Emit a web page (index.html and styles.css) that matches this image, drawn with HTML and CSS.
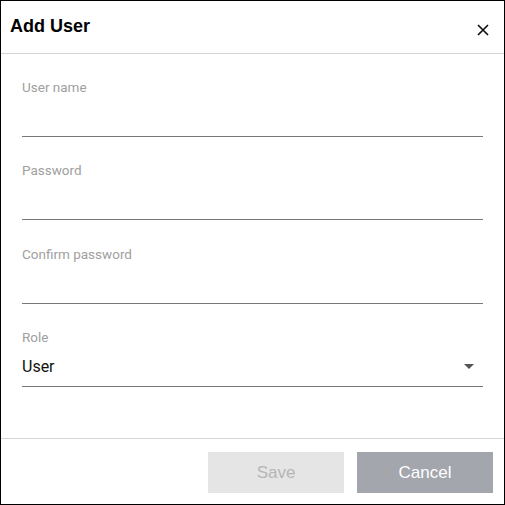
FILE: index.html
```html
<!DOCTYPE html>
<html>
<head>
<meta charset="utf-8">
<link rel="stylesheet" href="styles.css">
</head>
<body>
<div class="dialog">
  <div class="header">
    <h1 class="title">Add User</h1>
    <button class="close" aria-label="Close">
      <svg width="12" height="12" viewBox="0 0 12 12"><path d="M1 1L11 11M11 1L1 11" stroke="#111" stroke-width="1.7" fill="none"/></svg>
    </button>
  </div>
  <div class="body">
    <div class="field">
      <div class="label">User name</div>
      <div class="input"></div>
    </div>
    <div class="field">
      <div class="label">Password</div>
      <div class="input"></div>
    </div>
    <div class="field">
      <div class="label">Confirm password</div>
      <div class="input"></div>
    </div>
    <div class="field">
      <div class="label">Role</div>
      <div class="input select">
        <span class="value">User</span>
        <svg class="arrow" width="10" height="5" viewBox="0 0 10 5"><path d="M0 0H10L5 5Z" fill="#555"/></svg>
      </div>
    </div>
  </div>
  <div class="footer">
    <button class="btn save">Save</button>
    <button class="btn cancel">Cancel</button>
  </div>
</div>
</body>
</html>
```

FILE: styles.css
```css
* { box-sizing: border-box; }
html, body { margin: 0; padding: 0; background: #fff; }
.dialog {
  width: 505px;
  height: 505px;
  border: 1px solid #000;
  display: flex;
  flex-direction: column;
  font-family: Roboto, "Liberation Sans", sans-serif;
}
.header {
  height: 53px;
  border-bottom: 1px solid #d4d4d4;
  display: flex;
  align-items: center;
  justify-content: space-between;
  padding: 0 15px 0 9px;
}
.title {
  margin: 0;
  font-family: "Liberation Sans", Arial, sans-serif;
  font-weight: bold;
  font-size: 18px;
  color: #000;
  position: relative;
  top: -1px;
}
.close {
  border: 0;
  background: none;
  padding: 0;
  width: 12px;
  height: 12px;
  display: flex;
  position: relative;
  top: 3px;
}
.body {
  flex: 1;
  padding: 26px 21px 0 21px;
  display: flex;
  flex-direction: column;
  gap: 26.4px;
}
.label {
  font-size: 13.5px;
  line-height: 14px;
  color: #a0a0a0;
}
.input {
  height: 43px;
  border-bottom: 1px solid #777;
}
.select {
  display: flex;
  align-items: center;
  justify-content: space-between;
  padding: 2px 9px 0 0;
}
.value {
  font-size: 16px;
  color: #111;
}
.footer {
  height: 66px;
  border-top: 1px solid #d4d4d4;
  display: flex;
  justify-content: flex-end;
  align-items: flex-start;
  gap: 13px;
  padding: 13px 11px 0 0;
}
.btn {
  width: 136px;
  height: 41px;
  border: 0;
  font-family: "Liberation Sans", Arial, sans-serif;
  font-size: 17px;
}
.save { background: #e5e5e5; color: #b5b5b5; }
.cancel { background: #a3a6ad; color: #fff; }
```
